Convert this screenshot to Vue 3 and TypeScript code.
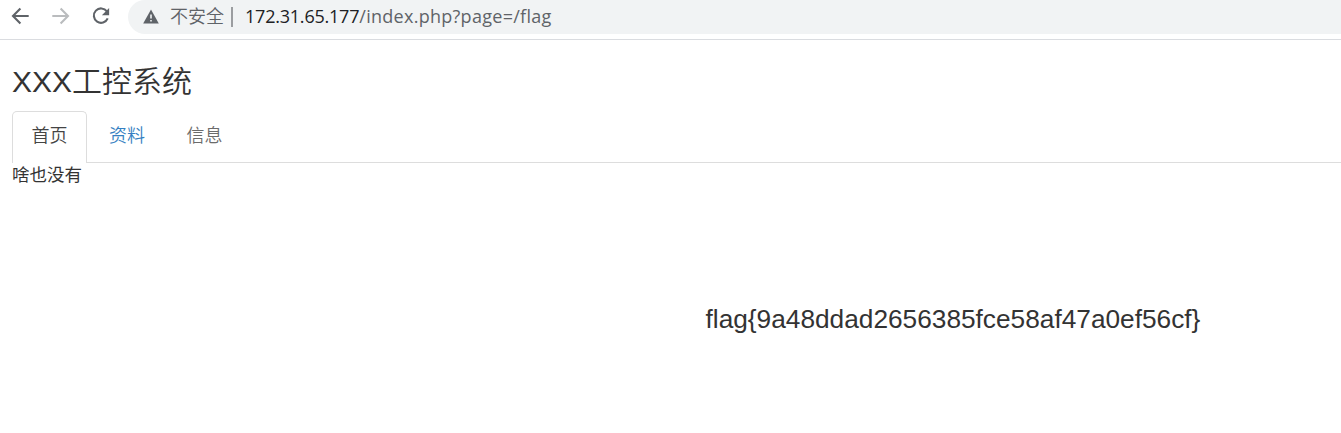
<script setup lang="ts">
interface Tab {
  label: string
  state: 'active' | 'link' | 'disabled'
}

const tabs: Tab[] = [
  { label: '首页', state: 'active' },
  { label: '资料', state: 'link' },
  { label: '信息', state: 'disabled' },
]
const host = '172.31.65.177'
const path = '/index.php?page=/flag'
const flag = 'flag{9a48ddad2656385fce58af47a0ef56cf}'
</script>

<template>
  <div class="window">
    <header class="toolbar">
      <svg class="nav" viewBox="0 0 20 20" aria-label="Back">
        <path d="M18.7 10H3.4M10.4 2.6L3 10L10.4 17.4" />
      </svg>
      <svg class="nav forward" viewBox="0 0 20 20" aria-label="Forward">
        <path d="M2.3 10H17.6M10.6 2.6L18 10L10.6 17.4" />
      </svg>
      <svg class="nav reload" viewBox="0 0 20 20" aria-label="Reload">
        <path d="M16.2 5.2A7.2 7.2 0 1 0 17 12.2" />
        <path class="solid" d="M18.4 1.8V9H11.2Z" />
      </svg>
      <div class="address">
        <svg class="warning" viewBox="0 0 16 15">
          <path class="triangle" d="M8 0.5L15.8 14.5H0.2Z" />
          <path class="mark" d="M8 5.5V9.5M8 11V12.6" />
        </svg>
        <span class="insecure">不安全</span>
        <span class="divider"></span>
        <span class="url"><span class="host">{{ host }}</span><span class="path">{{ path }}</span></span>
      </div>
    </header>
    <main class="page">
      <h3 class="title">XXX工控系统</h3>
      <ul class="tabs">
        <li v-for="tab in tabs" :key="tab.label" class="tab" :class="tab.state">{{ tab.label }}</li>
      </ul>
      <p class="empty">啥也没有</p>
      <div class="flag">{{ flag }}</div>
    </main>
  </div>
</template>

<style>
body {
  margin: 0;
  background: #fff;
}
</style>

<style scoped>
.window {
  height: 433px;
  overflow: hidden;
  color: #333;
  font-family: "Liberation Sans", "Noto Sans CJK SC", sans-serif;
}
.toolbar {
  box-sizing: border-box;
  height: 40px;
  border-bottom: 1px solid #dadce0;
  display: flex;
  align-items: flex-start;
  padding-left: 10px;
}
.nav {
  flex: none;
  width: 20px;
  height: 20px;
  margin-top: 6px;
  margin-right: 20px;
  fill: none;
  stroke: #5f6368;
  stroke-width: 2.1;
}
.forward {
  stroke: #babcbe;
}
.reload {
  margin-right: 18px;
  transform: translate(0.7px, 0.2px);
}
.solid {
  fill: #5f6368;
  stroke: none;
}
.address {
  flex: 1;
  height: 34px;
  background: #f1f3f4;
  border-radius: 17px 0 0 17px;
  display: flex;
  align-items: center;
  color: #5f6368;
}
.warning {
  width: 16px;
  height: 15px;
  margin-left: 15px;
  margin-right: 11px;
  margin-bottom: 1px;
}
.triangle {
  fill: #5f6368;
}
.mark {
  stroke: #f1f3f4;
  stroke-width: 1.6;
}
.insecure {
  width: 61px;
  font-size: 18px;
  font-weight: 350;
  line-height: 34px;
  white-space: nowrap;
}
.divider {
  width: 2px;
  height: 20px;
  margin-right: 12px;
  background: #9b9da0;
}
.url {
  padding-bottom: 2px;
  font-family: "Open Sans", "Noto Sans", sans-serif;
  font-size: 18px;
  line-height: 32px;
  white-space: nowrap;
}
.host {
  color: #202124;
  letter-spacing: -0.22px;
}
.path {
  letter-spacing: 0.28px;
}
.page {
  padding-left: 12px;
}
.title {
  margin: 0;
  padding-top: 25px;
  font-size: 30px;
  font-weight: 350;
  line-height: 33px;
}
.tabs {
  display: flex;
  height: 51px;
  margin: 13px 0 0;
  padding: 0;
  list-style: none;
  border-bottom: 1px solid #ddd;
}
.tab {
  box-sizing: border-box;
  width: 75px;
  height: 51px;
  margin-right: 2.5px;
  border: 1px solid transparent;
  border-radius: 5px 5px 0 0;
  padding-left: 18.5px;
  font-size: 18px;
  font-weight: 350;
  line-height: 49px;
  white-space: nowrap;
}
.active {
  height: 52px;
  border-color: #ddd;
  border-bottom: 0;
  background: #fff;
  color: #444;
}
.link {
  color: #357fc2;
}
.disabled {
  color: #6b6b6b;
}
.empty {
  margin: 0;
  font-size: 17.5px;
  line-height: 25px;
}
.flag {
  margin-top: 116px;
  margin-left: 693.5px;
  font-size: 26.25px;
  line-height: 30px;
}
</style>
